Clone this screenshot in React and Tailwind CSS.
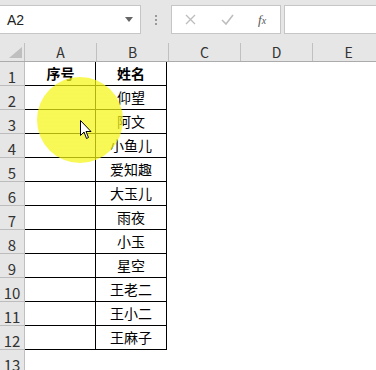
import React from "react";

const names = ["仰望", "阿文", "小鱼儿", "爱知趣", "大玉儿", "雨夜", "小玉", "星空", "王老二", "王小二", "王麻子"];
const font = { fontFamily: '"Noto Sans CJK SC", "Liberation Sans", sans-serif' };

export default function App() {
  const rows = [];
  for (let i = 1; i <= 13; i++) rows.push(i);
  return (
    <div className="relative w-[376px] h-[370px] overflow-hidden bg-white" style={font}>
      {/* toolbar */}
      <div className="flex h-[40px] bg-[#e6e6e6] items-start pt-[5px]">
        <div className="ml-[-1px] w-[142px] h-[29px] bg-white border border-[#c6c6c6] flex items-center justify-between pl-[7px] pr-[6px]">
          <span className="text-[14px] text-[#222] leading-none" style={{ fontFamily: '"Liberation Sans", sans-serif' }}>A2</span>
          <svg width="10" height="6" viewBox="0 0 10 6"><path d="M1 0 L9 0 L5 5 Z" fill="#666" /></svg>
        </div>
        <div className="w-[30px] h-[29px] flex flex-col items-center justify-center gap-[2px]">
          <div className="w-[2px] h-[2px] bg-[#999]" />
          <div className="w-[2px] h-[2px] bg-[#999]" />
          <div className="w-[2px] h-[2px] bg-[#999]" />
        </div>
        <div className="w-[110px] h-[29px] bg-white border border-[#c6c6c6] flex items-center">
          <svg className="ml-[13px]" width="11" height="11" viewBox="0 0 11 11"><path d="M1 1 L10 10 M10 1 L1 10" stroke="#bdbdbd" strokeWidth="1.3" /></svg>
          <svg className="ml-[25px]" width="13" height="11" viewBox="0 0 13 11"><path d="M1 6 L5 10 L12 1" stroke="#bdbdbd" strokeWidth="1.6" fill="none" /></svg>
          <span className="ml-[24px] text-[13px] italic text-[#555]" style={{ fontFamily: '"Liberation Serif", serif' }}>f<span className="text-[10px]">x</span></span>
        </div>
        <div className="ml-[3px] flex-1 h-[29px] bg-white border border-[#c6c6c6] mr-[-2px]" />
      </div>
      {/* grid */}
      <div className="flex flex-col">
        <div className="flex h-[22px] bg-[#e6e6e6] border-b border-[#ababab]">
          <div className="w-[25px] shrink-0 border-r border-[#c0c0c0] flex items-end justify-end pr-[2px] pb-[3px] mt-[3px]">
            <svg width="13" height="11" viewBox="0 0 13 11"><path d="M13 0 L13 11 L0 11 Z" fill="#bfbfbf" /></svg>
          </div>
          {["A", "B", "C", "D", "E"].map((c) => (
            <div key={c} className="w-[72px] shrink-0 border-r border-[#c0c0c0] mt-[3px] flex items-center justify-center text-[14px] text-[#333] leading-none pb-[1px]">{c}</div>
          ))}
        </div>
        {rows.map((r) => (
          <div key={r} className="flex h-[24px]">
            <div className="w-[25px] shrink-0 bg-[#e6e6e6] border-r border-[#c0c0c0] border-b border-b-[#bcbcbc] flex items-end justify-center text-[15px] text-[#333] leading-none pb-[1px]">{r}</div>
            {r <= 12 ? (
              <>
                <div className="w-[71px] shrink-0 border-b border-black border-r" />
                <div className={`w-[71px] shrink-0 border-b border-black border-r flex items-center justify-center text-[14px] text-black ${r === 1 ? "font-bold" : ""}`}>
                  {r === 1 ? "姓名" : names[r - 2]}
                </div>
              </>
            ) : null}
          </div>
        ))}
      </div>
      {/* header row 1 col A text */}
      <div className="absolute left-[25px] top-[62px] w-[71px] h-[23px] flex items-center justify-center text-[14px] font-bold text-black">序号</div>
      {/* yellow highlight */}
      <div className="absolute left-[37px] top-[77px] w-[86px] h-[86px] rounded-full" style={{ background: "radial-gradient(circle, rgba(245,245,20,0.72) 0%, rgba(245,245,20,0.72) 82%, rgba(250,250,60,0) 100%)" }} />
      {/* cursor */}
      <svg className="absolute left-[80px] top-[120px]" width="13" height="20" viewBox="0 0 13 20">
        <path d="M0.5 0.5 L0.5 15.5 L4 12 L6.5 18.5 L8.5 17.5 L6 11.5 L11 11.5 Z" fill="white" stroke="black" strokeWidth="1" strokeLinejoin="round" />
      </svg>
    </div>
  );
}
